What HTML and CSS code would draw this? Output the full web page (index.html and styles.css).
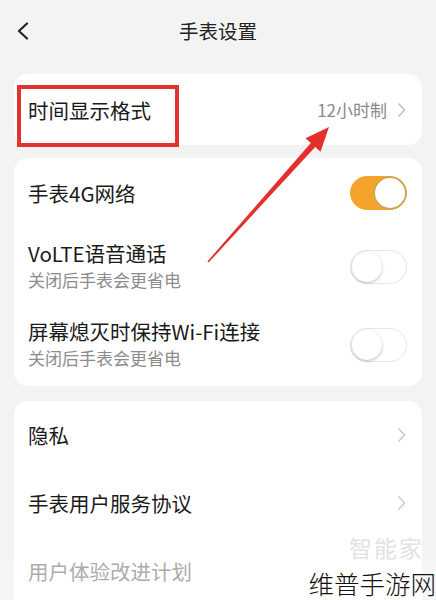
FILE: index.html
```html
<!DOCTYPE html>
<html lang="zh">
<head>
<meta charset="utf-8">
<link rel="stylesheet" href="styles.css">
</head>
<body>
<div class="page">
  <header class="topbar">
    <svg class="back" width="14" height="18" viewBox="0 0 14 18"><path d="M11 1.5 L3 9 L11 16.5" fill="none" stroke="#222" stroke-width="2.2" stroke-linecap="round" stroke-linejoin="round"/></svg>
    <div class="title">手表设置</div>
  </header>

  <section class="card card-time">
    <div class="row link">
      <span class="label">时间显示格式</span>
      <span class="value">12小时制</span>
      <svg class="chev" width="9" height="16" viewBox="0 0 9 16"><path d="M1.5 1.5 L7.5 8 L1.5 14.5" fill="none" stroke="#bdbdbd" stroke-width="1.4"/></svg>
    </div>
  </section>

  <section class="card card-net">
    <div class="row r1">
      <span class="label">手表4G网络</span>
      <span class="toggle on"><span class="knob"></span></span>
    </div>
    <div class="row r2">
      <div class="texts">
        <span class="label">VoLTE语音通话</span>
        <span class="sub">关闭后手表会更省电</span>
      </div>
      <span class="toggle"><span class="knob"></span></span>
    </div>
    <div class="row r3">
      <div class="texts">
        <span class="label">屏幕熄灭时保持Wi-Fi连接</span>
        <span class="sub">关闭后手表会更省电</span>
      </div>
      <span class="toggle"><span class="knob"></span></span>
    </div>
  </section>

  <section class="card card-more">
    <div class="row link r-more">
      <span class="label">隐私</span>
      <svg class="chev" width="9" height="16" viewBox="0 0 9 16"><path d="M1.5 1.5 L7.5 8 L1.5 14.5" fill="none" stroke="#c8c8c8" stroke-width="1.4"/></svg>
    </div>
    <div class="row link r-more">
      <span class="label">手表用户服务协议</span>
      <svg class="chev" width="9" height="16" viewBox="0 0 9 16"><path d="M1.5 1.5 L7.5 8 L1.5 14.5" fill="none" stroke="#c8c8c8" stroke-width="1.4"/></svg>
    </div>
    <div class="row link r-more">
      <span class="label">用户体验改进计划</span>
    </div>
  </section>

  <div class="highlight"></div>
  <svg class="arrow" width="436" height="600" viewBox="0 0 436 600">
    <polygon points="329,127 320.5,151.7 315.2,147 208.6,262.6 207.4,261.4 310.8,143 305.5,138.3" fill="#e3302c"/>
  </svg>
  <div class="fade"></div>
  <div class="wm-faint">智能家</div>
  <div class="wm">维普手游网</div>
</div>
</body>
</html>
```

FILE: styles.css
```css
* { box-sizing: border-box; }
html, body { margin: 0; padding: 0; }
body {
  background: #f3f3f3;
  font-family: "Noto Sans CJK SC", "Noto Sans", sans-serif;
  color: #1e1e1e;
}
.page {
  position: relative;
  width: 436px;
  height: 600px;
  overflow: hidden;
  padding: 0 14px;
}
.topbar {
  position: relative;
  height: 60px;
  display: flex;
  align-items: center;
  justify-content: center;
}
.back {
  position: absolute;
  left: 2px;
  top: 22px;
}
.title {
  font-size: 19.5px;
  color: #222;
  margin-top: 1px;
}
.card {
  background: #fff;
  border-radius: 14px;
}
.card-time { margin-top: 14px; }
.card-net { margin-top: 13px; padding-bottom: 2px; }
.card-more { margin-top: 15px; height: 220px; }
.row {
  display: flex;
  align-items: center;
  padding: 0 16px 0 14px;
}
.card-time .row { height: 71px; }
.label {
  font-size: 20.5px;
  line-height: 26px;
  color: #1a1a1a;
  flex: 1;
}
.value {
  font-size: 17px;
  color: #8a8a8a;
  margin-right: 10px;
}
.chev { flex: none; }
.r1 { height: 70px; }
.r2 { height: 78px; }
.r3 { height: 78px; }
.texts {
  flex: 1;
  display: flex;
  flex-direction: column;
}
.r2 .texts { margin-top: -4px; }
.r3 .texts { margin-top: -4px; }
.sub {
  font-size: 17px;
  line-height: 22px;
  color: #8c8c8c;
  margin-top: 3px;
}
.toggle {
  position: relative;
  flex: none;
  width: 57px;
  height: 34px;
  border-radius: 17px;
  background: #fff;
  border: 1px solid #e4e4e4;
  margin-right: -1px;
}
.toggle .knob {
  position: absolute;
  top: 1px;
  left: 1px;
  width: 30px;
  height: 30px;
  border-radius: 50%;
  background: #fff;
  box-shadow: 0 1px 3px rgba(0,0,0,0.28);
}
.toggle.on {
  background: #f4a42a;
  border-color: #f4a42a;
}
.toggle.on .knob {
  left: auto;
  right: 1px;
  box-shadow: 0 0 0 1.5px #c9a55a;
}
.r-more { height: 68px; }
.r-more:last-child .label { color: #888; }
.highlight {
  position: absolute;
  left: 17px;
  top: 85px;
  width: 162px;
  height: 62px;
  border: 4px solid #e2342f;
}
.arrow {
  position: absolute;
  left: 0;
  top: 0;
}
.fade {
  position: absolute;
  left: 0;
  top: 560px;
  width: 436px;
  height: 40px;
  background: rgba(255,255,255,0.3);
}
.wm-faint {
  position: absolute;
  right: 12px;
  top: 536px;
  font-size: 23px;
  line-height: 23px;
  color: #e2e2e2;
  letter-spacing: 2px;
}
.wm {
  position: absolute;
  right: 0;
  top: 568px;
  font-size: 25.5px;
  font-weight: 300;
  color: #111;
  line-height: 30px;
}
```
